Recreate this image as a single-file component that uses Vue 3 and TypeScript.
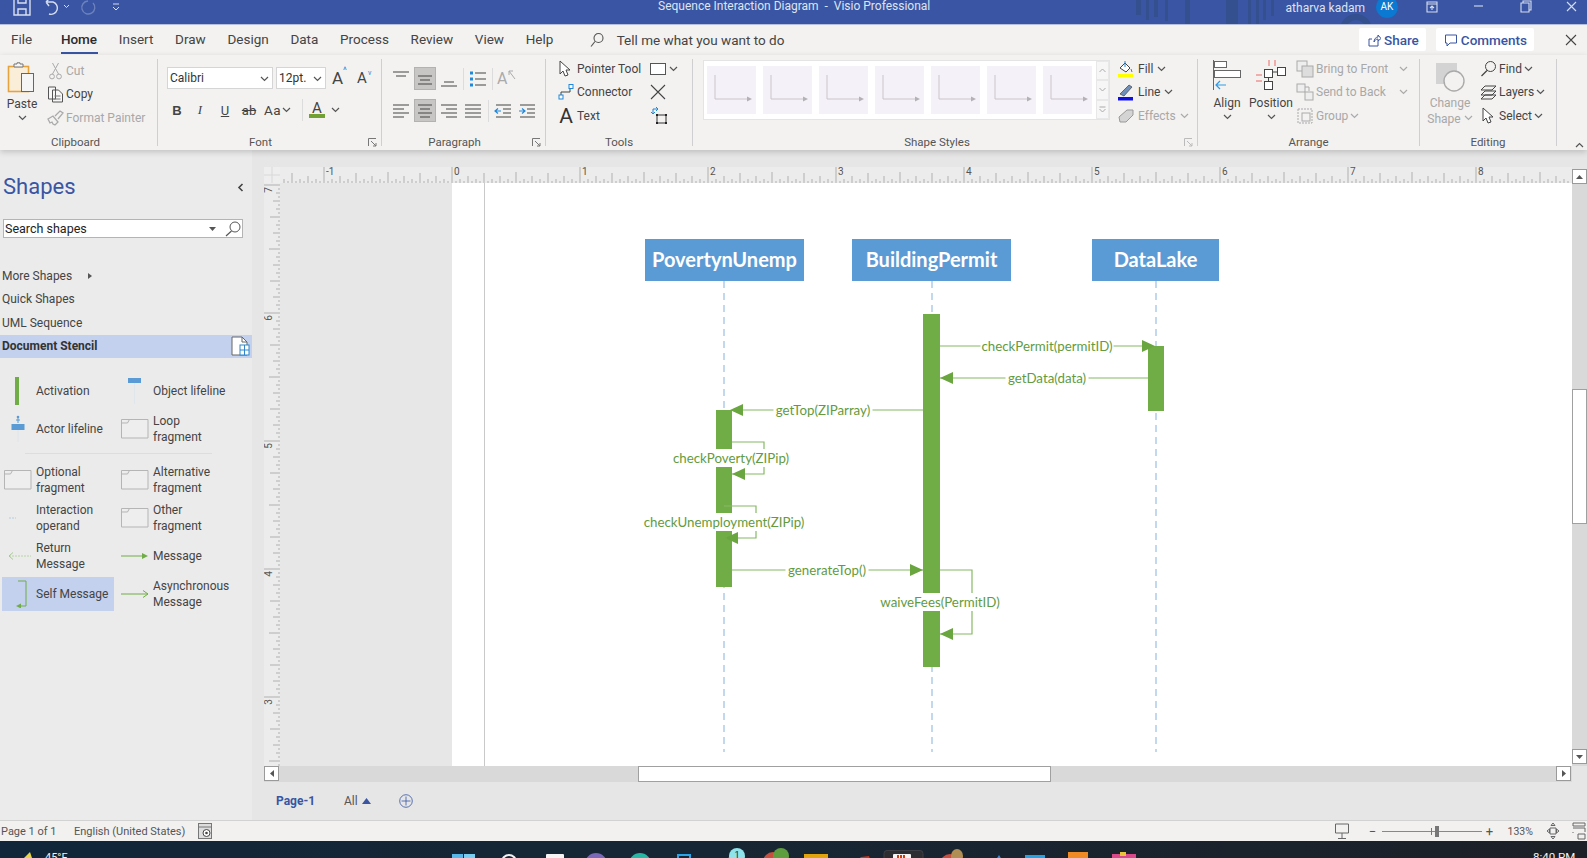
<script setup lang="ts">
import { computed, h } from 'vue'

// little dropdown caret used all over the ribbon
const Chev = (props: { c?: string }) =>
  h('svg', { width: 9, height: 6, viewBox: '0 0 9 6', style: 'flex:none' }, [
    h('path', { d: 'M1 1l3.5 3.5L8 1', fill: 'none', stroke: props.c || '#555', 'stroke-width': 1.2 }),
  ])
Chev.props = ['c']

const tabs = ['Insert', 'Draw', 'Design', 'Data', 'Process', 'Review', 'View', 'Help']

const paraTop = [
  { d: 'M2 3h16M5 7h10', active: false },
  { d: 'M3 7h14M5 11h10M3 15h14', active: true },
  { d: 'M5 13h10M2 17h16', active: false },
]
const paraBottom = [
  { d: 'M2 4h16M2 8h11M2 12h16M2 16h11', active: false },
  { d: 'M3 4h14M5 8h10M3 12h14M5 16h10', active: true },
  { d: 'M2 4h16M7 8h11M2 12h16M7 16h11', active: false },
  { d: 'M2 4h16M2 8h16M2 12h16M2 16h16', active: false },
]
const thumbs = [0, 1, 2, 3, 4, 5, 6]

// ruler ticks, one every 1/32 inch
const rulerMarks = [-1, 0, 1, 2, 3, 4, 5, 6, 7, 8]
const tickLen = (i: number) =>
  i % 32 === 0 ? 16 : i % 16 === 0 ? 11 : i % 8 === 0 ? 10 : i % 4 === 0 ? 7 : i % 2 === 0 ? 4 : 2
const hTicks = computed(() => {
  let d = ''
  for (let i = -44; i < 340; i++) {
    const x = 452 + i * 4
    if (x > 280 && x < 1572) d += `M${x} 183v-${tickLen(i)}`
  }
  return d
})
const vMarks = [7, 6, 5, 4, 3]
const vTicks = computed(() => {
  let d = ''
  for (let i = 0; i < 148; i++) {
    const y = 185 + i * 4
    d += `M280 ${y}h-${tickLen(i)}`
  }
  return d
})

// sequence diagram
const heads = [
  { name: 'PovertynUnemp', x: 645, w: 159 },
  { name: 'BuildingPermit', x: 852, w: 159 },
  { name: 'DataLake', x: 1092, w: 127 },
]
const lifelines = [724, 932, 1156]
const bars = [
  { x: 716, y: 410, w: 16, h: 177 },
  { x: 923, y: 314, w: 17, h: 353 },
  { x: 1148, y: 346, w: 16, h: 65 },
]
const lines = [
  'M940 346H1148',
  'M1148 378H940',
  'M923 410H732',
  'M732 442H764V474H732',
  'M724 506H756V538H726',
  'M732 570H923',
  'M940 570H972V634H940',
]
const arrows = [
  'M1155 346l-13 -6v12z',
  'M940 378l13 -6v12z',
  'M730 410l13 -6v12z',
  'M732 474l13 -6v12z',
  'M725 538l13 -6v12z',
  'M923 570l-13 -6v12z',
  'M940 634l13 -6v12z',
]
const labels = [
  { text: 'checkPermit(permitID)', cx: 1047, cy: 346, w: 133 },
  { text: 'getData(data)', cx: 1047, cy: 378, w: 83 },
  { text: 'getTop(ZIParray)', cx: 823, cy: 410, w: 99 },
  { text: 'checkPoverty(ZIPip)', cx: 731, cy: 458, w: 116 },
  { text: 'checkUnemployment(ZIPip)', cx: 724, cy: 522, w: 162 },
  { text: 'generateTop()', cx: 827, cy: 570, w: 83 },
  { text: 'waiveFees(PermitID)', cx: 940, cy: 602, w: 122 },
]
</script>

<template>
  <div class="app">
    <!-- title bar -->
    <header class="titlebar">
      <svg class="deco" width="290" height="24" viewBox="1130 0 290 24">
        <g fill="#34508f">
          <rect x="1136" y="0" width="5" height="15" />
          <rect x="1146" y="0" width="3" height="20" />
          <rect x="1154" y="0" width="4" height="17" />
          <rect x="1165" y="0" width="3" height="21" />
          <rect x="1185" y="0" width="5" height="24" />
          <rect x="1226" y="0" width="12" height="24" />
          <rect x="1248" y="0" width="3" height="24" />
          <rect x="1256" y="0" width="3" height="24" />
          <rect x="1263" y="0" width="3" height="20" />
          <rect x="1271" y="0" width="3" height="16" />
        </g>
        <circle cx="1356" cy="30" r="13" fill="none" stroke="#34508f" stroke-width="6" />
      </svg>
      <svg class="qat" width="658" height="24" viewBox="0 0 658 24">
        <g fill="none" stroke="#d7def0" stroke-width="1.4">
          <path d="M14 -2H28L30 0V15H14Z" />
          <path d="M18 15V9H26V15M18 -2V3H26V-2" />
          <path d="M46 2H53A5 5 0 0 1 49 14M46 2L49 -1M46 2L49 6" />
          <path d="M64 5l2.5 2.5L69 5" stroke-width="1" />
          <path d="M93 3A6.5 6.5 0 1 1 88 1" stroke="#6d82bd" />
          <path d="M113 4h6M113 7l3 3 3-3" stroke-width="1" />
        </g>
      </svg>
      <div class="doc-title">Sequence Interaction Diagram&nbsp; - &nbsp;Visio Professional</div>
      <div class="user">atharva kadam</div>
      <div class="avatar">AK</div>
      <svg class="winctl" width="167" height="24" viewBox="1420 0 167 24">
        <g fill="none" stroke="#d7def0" stroke-width="1.1">
          <path d="M1427 2h10v10h-10zM1427 4h10M1432 10V6M1430 8l2-2 2 2" />
          <path d="M1474 6h9" />
          <path d="M1521 3h8v9h-8zM1523 3V1h8v9h-2" />
          <path d="M1567 2l9 9M1576 2l-9 9" />
        </g>
      </svg>
    </header>

    <!-- tabs -->
    <nav class="tabrow">
      <span class="tab file">File</span>
      <span class="tab home">Home</span>
      <span v-for="t in tabs" :key="t" class="tab">{{ t }}</span>
      <svg class="tell-icon" width="16" height="16" viewBox="0 0 16 16">
        <circle cx="9.5" cy="6" r="4.5" fill="none" stroke="#555" stroke-width="1.1" />
        <path d="M6 9.5L2 14.5" stroke="#555" stroke-width="1.2" />
      </svg>
      <span class="tell">Tell me what you want to do</span>
      <button class="top-btn share">
        <svg width="14" height="14" viewBox="0 0 14 14"><path d="M2 6v7h9V8M2 6h3M7 9c0-3 2-5 4-5V2l3 3.5L11 8V6C9 6 8 7 7 9z" fill="none" stroke="#3955a3" stroke-width="1" /></svg>
        Share
      </button>
      <button class="top-btn comments">
        <svg width="14" height="14" viewBox="0 0 14 14"><path d="M1.5 2h11v8H6l-3 3v-3H1.5z" fill="none" stroke="#3955a3" stroke-width="1" /></svg>
        Comments
      </button>
      <svg class="close-doc" width="12" height="12" viewBox="0 0 12 12"><path d="M1 1l10 10M11 1L1 11" stroke="#444" stroke-width="1.1" /></svg>
    </nav>

    <!-- ribbon -->
    <section class="ribbon">
      <div class="group g-clip">
        <div class="body clip-body">
          <div class="big paste">
            <svg width="30" height="32" viewBox="0 0 30 32">
              <rect x="1.5" y="4.5" width="20" height="25" fill="#fbeed8" stroke="#e6a23c" stroke-width="1.6" />
              <path d="M7 5V2h3V0.8h3V2h3v3z" fill="#f6f6f6" stroke="#777" />
              <rect x="14.5" y="11.5" width="12" height="18" fill="#f5f5f5" stroke="#666" />
            </svg>
            <span class="big-label">Paste</span>
            <Chev />
          </div>
          <div class="col">
            <div class="row dim">
              <svg class="ico" width="16" height="18" viewBox="0 0 16 18"><path d="M5 1l6 11M11 1L5 12" stroke="#aaa" fill="none" /><circle cx="4.5" cy="14.5" r="2.4" fill="none" stroke="#aaa" /><circle cx="11.5" cy="14.5" r="2.4" fill="none" stroke="#aaa" /></svg>
              Cut
            </div>
            <div class="row">
              <svg class="ico" width="16" height="18" viewBox="0 0 16 18"><path d="M1 2h7v12H1zM5 5h6l4 4v8H5z" fill="#f7f7f7" stroke="#555" /><path d="M7 11h6M7 14h6" stroke="#777" /></svg>
              Copy
            </div>
            <div class="row dim">
              <svg class="ico" width="17" height="16" viewBox="0 0 17 16"><path d="M1 9l5-3 5 6-3 3-2-1-1-2-2 1zM8 6l5-5 3 2-5 6" fill="none" stroke="#aaa" stroke-width="1.3" /></svg>
              Format Painter
            </div>
          </div>
        </div>
        <div class="glabel">Clipboard</div>
      </div>

      <div class="group g-font">
        <div class="body">
          <div class="font-top">
            <div class="combo name">Calibri<Chev class="combo-ch" /></div>
            <div class="combo size">12pt.<Chev class="combo-ch" /></div>
            <span class="grow-a">A<i>^</i></span>
            <span class="grow-a second">A<i class="down">v</i></span>
          </div>
          <div class="font-bottom">
            <b class="cell fb">B</b>
            <i class="cell fi">I</i>
            <u class="cell">U</u>
            <s class="cell">ab</s>
            <span class="cell aa">Aa <Chev /></span>
            <span class="cell"><span class="vsep"></span></span>
            <span class="cell color-a">A</span>
            <span class="cell"><Chev /></span>
          </div>
        </div>
        <div class="glabel">Font</div>
        <svg class="launcher" width="9" height="9" viewBox="0 0 9 9"><path d="M.5 8V.5H8M3 3l5 5M8 5v3H5" fill="none" stroke="#777" /></svg>
      </div>

      <div class="group g-para">
        <div class="body">
          <div class="para-row">
            <span v-for="(p, i) in paraTop" :key="i" class="pcell" :class="{ on: p.active }">
              <svg width="20" height="20" viewBox="0 0 20 20"><path :d="p.d" stroke="#444" stroke-width="1.2" /></svg>
            </span>
            <span class="vsep short"></span>
            <span class="pcell">
              <svg width="20" height="20" viewBox="0 0 20 20">
                <path d="M7 4h11M7 10h11M7 16h11" stroke="#444" stroke-width="1.2" />
                <path d="M2 2.5h3v3H2zM2 8.5h3v3H2zM2 14.5h3v3H2z" fill="#1f88d9" />
              </svg>
            </span>
            <span class="vsep short"></span>
            <span class="rtl-a">A<svg width="9" height="11" viewBox="0 0 9 11"><path d="M8 10L2 2M2 6V2h4" fill="none" stroke="#aaa" /></svg></span>
          </div>
          <div class="para-row second">
            <span v-for="(p, i) in paraBottom" :key="i" class="pcell" :class="{ on: p.active }">
              <svg width="20" height="20" viewBox="0 0 20 20"><path :d="p.d" stroke="#444" stroke-width="1.2" /></svg>
            </span>
            <span class="vsep short tight"></span>
            <span class="pcell">
              <svg width="20" height="20" viewBox="0 0 20 20"><path d="M3 4h15M10 8h8M10 12h8M3 16h15" stroke="#444" stroke-width="1.1" /><path d="M8 10H2M5 7.5L2 10l3 2.5" fill="none" stroke="#1f88d9" stroke-width="1.2" /></svg>
            </span>
            <span class="pcell">
              <svg width="20" height="20" viewBox="0 0 20 20"><path d="M3 4h15M10 8h8M10 12h8M3 16h15" stroke="#444" stroke-width="1.1" /><path d="M2 10h6M5 7.5L8 10l-3 2.5" fill="none" stroke="#1f88d9" stroke-width="1.2" /></svg>
            </span>
          </div>
        </div>
        <div class="glabel">Paragraph</div>
        <svg class="launcher" width="9" height="9" viewBox="0 0 9 9"><path d="M.5 8V.5H8M3 3l5 5M8 5v3H5" fill="none" stroke="#777" /></svg>
      </div>

      <div class="group g-tools">
        <div class="body tools-body">
          <div class="col tools-text">
            <div class="row">
              <svg class="ico t" width="16" height="18" viewBox="0 0 16 18"><path d="M2 1v13l3-3 2 5 3-1-2-5h4z" fill="#fff" stroke="#444" /></svg>
              Pointer Tool
            </div>
            <div class="row">
              <svg class="ico t" width="16" height="18" viewBox="0 0 16 18"><path d="M3 13V9h9V5" fill="none" stroke="#444" /><rect x="1" y="12" width="4" height="4" fill="#fff" stroke="#1f88d9" /><rect x="11" y="1.500" width="4" height="4" fill="#fff" stroke="#1f88d9" /></svg>
              Connector
            </div>
            <div class="row">
              <span class="big-a t">A</span>
              Text
            </div>
          </div>
          <div class="col tools-right">
            <div class="row r-ic">
              <svg width="16" height="14" viewBox="0 0 16 14"><rect x=".5" y="1.500" width="15" height="11" fill="#fff" stroke="#555" /></svg>
              <Chev class="tool-ch" />
            </div>
            <div class="row r-ic">
              <svg width="16" height="16" viewBox="0 0 16 16"><path d="M1 1l14 14M15 1L1 15" stroke="#444" stroke-width="1.1" /></svg>
            </div>
            <div class="row r-ic">
              <svg width="17" height="17" viewBox="0 0 17 17"><path d="M7 8h9v8H7z" fill="none" stroke="#333" /><path d="M6 7h2v2H6zM15 7h2v2h-2zM6 15h2v2H6zM15 15h2v2h-2z" fill="#222" /><path d="M1 5l2 2 2-2M3 7V2h5M6 0l2 2-2 2" fill="none" stroke="#1f88d9" /></svg>
            </div>
          </div>
        </div>
        <div class="glabel">Tools</div>
      </div>

      <div class="group g-styles">
        <div class="body styles-body">
          <div class="gallery">
            <div class="thumbs">
              <div v-for="t in thumbs" :key="t" class="thumb">
                <svg width="49" height="48" viewBox="0 0 49 48"><path d="M8 9V33H41" fill="none" stroke="#c9c5c9" /><path d="M45 33l-5-2.500v5z" fill="#b4b0b4" /></svg>
              </div>
            </div>
            <div class="gal-btns">
              <span><svg width="7" height="5" viewBox="0 0 7 5"><path d="M.5 4l3-3 3 3" fill="none" stroke="#aaa" /></svg></span>
              <span><svg width="7" height="5" viewBox="0 0 7 5"><path d="M.5 1l3 3 3-3" fill="none" stroke="#aaa" /></svg></span>
              <span><svg width="7" height="7" viewBox="0 0 7 7"><path d="M.5 1h6M.5 3l3 3 3-3" fill="none" stroke="#aaa" /></svg></span>
            </div>
          </div>
          <div class="col fill-col">
            <div class="row">
              <svg class="ico f" width="16" height="18" viewBox="0 0 16 18"><path d="M2 8l5-5 5 5-4 4z" fill="#fff" stroke="#444" /><path d="M7 1v6M13 9l1 3" stroke="#1f88d9" /><rect y="14" width="15" height="3.500" fill="#ffff00" /></svg>
              Fill <Chev />
            </div>
            <div class="row">
              <svg class="ico f" width="16" height="18" viewBox="0 0 16 18"><path d="M2 11L11 2l3 2-8 9z" fill="#6f8fb8" stroke="#444" stroke-width=".7" /><rect y="14" width="15" height="3.500" fill="#1010e0" /></svg>
              Line <Chev />
            </div>
            <div class="row dim">
              <svg class="ico f" width="16" height="16" viewBox="0 0 16 16"><path d="M1 9l8-7h6v5l-7 7H2z" fill="#d4d4d4" stroke="#999" /></svg>
              Effects <Chev c="#aaa" />
            </div>
          </div>
        </div>
        <div class="glabel">Shape Styles</div>
        <svg class="launcher" width="9" height="9" viewBox="0 0 9 9"><path d="M.5 8V.5H8M3 3l5 5M8 5v3H5" fill="none" stroke="#bbb" /></svg>
      </div>

      <div class="group g-arrange">
        <div class="body arrange-body">
          <div class="big b-align">
            <svg width="30" height="32" viewBox="0 0 30 32">
              <path d="M1.500 0V30" stroke="#666" />
              <rect x="2.500" y="1.500" width="12" height="6" fill="#fff" stroke="#666" />
              <rect x="2.500" y="10.500" width="26" height="7" fill="#fff" stroke="#666" />
              <path d="M14 25H4M8 21l-4 4 4 4" fill="none" stroke="#2e9be6" stroke-width="1.2" />
            </svg>
            <span class="big-label">Align</span>
            <Chev />
          </div>
          <div class="big b-pos">
            <svg width="34" height="32" viewBox="0 0 34 32">
              <path d="M15 0v6M21 0v6M2 15h6M2 21h6" stroke="#e66" />
              <rect x="10.500" y="9.500" width="8" height="8" fill="#fff" stroke="#444" />
              <rect x="23.500" y="7.500" width="8" height="8" fill="#fff" stroke="#444" />
              <rect x="10.500" y="21.500" width="8" height="8" fill="#fff" stroke="#444" />
              <path d="M18 12h6M14.500 17v5" stroke="#444" />
            </svg>
            <span class="big-label">Position</span>
            <Chev />
          </div>
          <div class="col arr-col">
            <div class="row dim">
              <svg class="ico a" width="18" height="18" viewBox="0 0 18 18"><rect x="1" y="1" width="10" height="10" fill="#eee" stroke="#aaa" /><rect x="6" y="6" width="11" height="11" fill="#ddd" stroke="#aaa" /></svg>
              <span class="arr-t">Bring to Front</span><Chev c="#aaa" />
            </div>
            <div class="row dim">
              <svg class="ico a" width="18" height="18" viewBox="0 0 18 18"><rect x="1" y="1" width="8" height="8" fill="#eee" stroke="#aaa" /><rect x="9" y="9" width="8" height="8" fill="#eee" stroke="#aaa" /><path d="M9 4h4v4" fill="none" stroke="#aaa" /></svg>
              <span class="arr-t">Send to Back</span><Chev c="#aaa" />
            </div>
            <div class="row dim">
              <svg class="ico a" width="18" height="18" viewBox="0 0 18 18"><rect x="2" y="2" width="14" height="14" fill="none" stroke="#aaa" stroke-dasharray="2 1" /><rect x="6" y="6" width="8" height="8" fill="none" stroke="#aaa" /></svg>
              Group <Chev c="#aaa" />
            </div>
          </div>
        </div>
        <div class="glabel">Arrange</div>
      </div>

      <div class="group g-edit">
        <div class="body edit-body">
          <div class="big b-change">
            <svg width="30" height="30" viewBox="0 0 30 30"><rect x="1" y="1" width="21" height="21" fill="#d3d3d3" /><circle cx="19" cy="19" r="10" fill="#f3f2f1" stroke="#aaa" stroke-width="1.4" /></svg>
            <span class="big-label dim">Change</span>
            <span class="big-label dim sh">Shape <Chev c="#aaa" /></span>
          </div>
          <div class="col edit-col">
            <div class="row">
              <svg class="ico e" width="17" height="17" viewBox="0 0 17 17"><circle cx="10.500" cy="6.500" r="5" fill="none" stroke="#444" /><path d="M7 10.500L1.500 16" stroke="#444" stroke-width="1.2" /></svg>
              Find <Chev />
            </div>
            <div class="row">
              <svg class="ico e" width="17" height="17" viewBox="0 0 17 17"><path d="M5 2h11l-4 4H1zM5 7h11l-4 4H1zM5 11h11l-4 4H1z" fill="#f3f2f1" stroke="#444" /></svg>
              Layers <Chev />
            </div>
            <div class="row">
              <svg class="ico e" width="17" height="18" viewBox="0 0 17 18"><path d="M3 1v13l3-3 2 5 3-1-2-5h4z" fill="#fff" stroke="#444" /></svg>
              Select <Chev />
            </div>
          </div>
        </div>
        <div class="glabel">Editing</div>
      </div>

      <svg class="collapse" width="9" height="6" viewBox="0 0 9 6"><path d="M1 5l3.500-3.500L8 5" fill="none" stroke="#555" stroke-width="1.2" /></svg>
    </section>

    <!-- work area -->
    <div class="work">
      <aside class="panel">
        <div class="panel-head">
          <h2>Shapes</h2>
          <svg width="7" height="9" viewBox="0 0 7 9"><path d="M5.500 1L2 4.500 5.500 8" fill="none" stroke="#444" stroke-width="1.600" /></svg>
        </div>
        <div class="search">
          <span>Search shapes</span>
          <svg class="drop" width="7" height="4" viewBox="0 0 7 4"><path d="M0 0h7L3.500 4z" fill="#555" /></svg>
          <svg width="16" height="16" viewBox="0 0 16 16"><circle cx="10" cy="6" r="5" fill="none" stroke="#555" /><path d="M6.500 10L1 15" stroke="#555" stroke-width="1.200" /></svg>
        </div>
        <div class="stencils">
          <div class="st">More Shapes <svg width="4" height="6" viewBox="0 0 4 6"><path d="M0 0l4 3-4 3z" fill="#555" /></svg></div>
          <div class="st">Quick Shapes</div>
          <div class="st">UML Sequence</div>
          <div class="st cur">
            <b>Document Stencil</b>
            <svg width="19" height="20" viewBox="0 0 19 20"><path d="M1 1h10l5 5v13H1z" fill="#fff" stroke="#666" /><path d="M11 1v5h5" fill="none" stroke="#666" /><rect x="9" y="9" width="9" height="10" fill="#fff" stroke="#2e86c9" /><path d="M13.500 9v10M9 14h9" stroke="#2e86c9" /></svg>
          </div>
        </div>
        <div class="shape-grid">
          <div class="item">
            <span class="si"><svg width="6" height="28" viewBox="0 0 6 28"><rect width="4" height="28" fill="#70ad47" /></svg></span>
            <span>Activation</span>
          </div>
          <div class="item">
            <span class="si"><svg width="16" height="28" viewBox="0 0 16 28"><rect x="1" y="1" width="13" height="5" fill="#5b9bd5" /><path d="M7.500 6v21" stroke="#dfe6ec" /></svg></span>
            <span>Object lifeline</span>
          </div>
          <div class="item">
            <span class="si"><svg width="16" height="28" viewBox="0 0 16 28"><circle cx="8" cy="2" r="1.300" fill="#5b9bd5" /><path d="M8 3v5M6 5h4" stroke="#5b9bd5" /><rect x="1.500" y="9" width="13" height="6" fill="#5b9bd5" /><path d="M8 15v12" stroke="#dfe6ec" /></svg></span>
            <span>Actor lifeline</span>
          </div>
          <div class="item">
            <span class="si"><svg class="frag" width="28" height="20" viewBox="0 0 28 20"><path d="M.5.500h26.500v18.500H.5zM.5 4h6l2-3.500" fill="#eee" stroke="#b5b5b5" /></svg></span>
            <span>Loop<br />fragment</span>
          </div>
          <div class="divider"></div>
          <div class="item">
            <span class="si"><svg class="frag" width="28" height="20" viewBox="0 0 28 20"><path d="M.5.500h26.500v18.500H.5zM.5 4h6l2-3.500" fill="#eee" stroke="#b5b5b5" /></svg></span>
            <span>Optional<br />fragment</span>
          </div>
          <div class="item">
            <span class="si"><svg class="frag" width="28" height="20" viewBox="0 0 28 20"><path d="M.5.500h26.500v18.500H.5zM.5 4h6l2-3.500" fill="#eee" stroke="#b5b5b5" /></svg></span>
            <span>Alternative<br />fragment</span>
          </div>
          <div class="item">
            <span class="si"><svg width="28" height="8" viewBox="0 0 28 8"><path d="M5 4h7" stroke="#b7cbe0" stroke-dasharray="2 1" /></svg></span>
            <span>Interaction<br />operand</span>
          </div>
          <div class="item">
            <span class="si"><svg class="frag" width="28" height="20" viewBox="0 0 28 20"><path d="M.5.500h26.500v18.500H.5zM.5 4h6l2-3.500" fill="#eee" stroke="#b5b5b5" /></svg></span>
            <span>Other<br />fragment</span>
          </div>
          <div class="item">
            <span class="si"><svg width="28" height="10" viewBox="0 0 28 10"><path d="M5 5h22" stroke="#b9d3a6" stroke-dasharray="2 1" /><path d="M9 1.500L5 5l4 3.500" fill="none" stroke="#a8c993" /></svg></span>
            <span>Return<br />Message</span>
          </div>
          <div class="item">
            <span class="si"><svg width="28" height="10" viewBox="0 0 28 10"><path d="M0 5h22" stroke="#70ad47" /><path d="M27 5l-6-3v6z" fill="#70ad47" /></svg></span>
            <span>Message</span>
          </div>
          <div class="item sel">
            <span class="si"><svg width="20" height="28" viewBox="0 0 20 28"><path d="M9 1h8V26H9" fill="none" stroke="#70ad47" /><path d="M7 26l5-2.500v5z" fill="#70ad47" /></svg></span>
            <span>Self Message</span>
          </div>
          <div class="item">
            <span class="si"><svg width="28" height="10" viewBox="0 0 28 10"><path d="M0 5h27M22 1.500L27 5l-5 3.500" fill="none" stroke="#70ad47" /></svg></span>
            <span>Asynchronous<br />Message</span>
          </div>
        </div>
      </aside>

      <div class="main">
        <div class="corner">
          <svg width="16" height="16" viewBox="0 0 16 16"><path d="M8 0v16M0 8h16" stroke="#d8d8d8" /></svg>
        </div>
        <svg class="hruler" width="1292" height="16" viewBox="280 167 1292 16">
          <path :d="hTicks" stroke="#b0b0b0" />
          <text v-for="n in rulerMarks" :key="n" :x="452 + n * 128 + 2" y="175" class="rtext">{{ n }}</text>
        </svg>
        <svg class="vruler" width="16" height="583" viewBox="264 183 16 583">
          <path :d="vTicks" stroke="#b0b0b0" />
          <text
            v-for="(n, i) in vMarks"
            :key="n"
            class="rtext"
            text-anchor="middle"
            :transform="`translate(272 ${190 + i * 128}) rotate(-90)`"
          >{{ n }}</text>
        </svg>

        <div class="canvas">
          <svg width="1292" height="583" viewBox="280 183 1292 583">
            <rect x="280" y="183" width="172" height="583" fill="#e7e7e7" />
            <rect x="452" y="183" width="1120" height="583" fill="#fff" />
            <path d="M484.500 183V766" stroke="#c9c9c9" />
            <line
              v-for="x in lifelines"
              :key="x"
              :x1="x"
              :x2="x"
              y1="281"
              y2="752"
              stroke="#a8c8e8"
              stroke-width="1.400"
              stroke-dasharray="7 5"
            />
            <g v-for="b in heads" :key="b.name">
              <rect :x="b.x" y="239" :width="b.w" height="42" fill="#5b9bd5" />
              <text :x="b.x + b.w / 2" y="267" class="head-text" text-anchor="middle">{{ b.name }}</text>
            </g>
            <rect v-for="(a, i) in bars" :key="i" :x="a.x" :y="a.y" :width="a.w" :height="a.h" fill="#70ad47" />
            <path v-for="(d, i) in lines" :key="i" :d="d" fill="none" stroke="#85b964" stroke-width="1.200" />
            <path v-for="(d, i) in arrows" :key="i" :d="d" fill="#6aa63f" />
            <g v-for="l in labels" :key="l.text">
              <rect :x="l.cx - l.w / 2" :y="l.cy - 9" :width="l.w" height="18" fill="#fff" />
              <text :x="l.cx" :y="l.cy + 5" class="msg-text" text-anchor="middle">{{ l.text }}</text>
            </g>
          </svg>
        </div>

        <div class="vscroll">
          <span class="sbtn"><svg width="7" height="4" viewBox="0 0 7 4"><path d="M0 4l3.500-4L7 4z" fill="#555" /></svg></span>
          <span class="vthumb"></span>
          <span class="sbtn down"><svg width="7" height="4" viewBox="0 0 7 4"><path d="M0 0l3.500 4L7 0z" fill="#555" /></svg></span>
        </div>

        <div class="hscroll">
          <span class="sbtn"><svg width="4" height="7" viewBox="0 0 4 7"><path d="M4 0L0 3.500 4 7z" fill="#555" /></svg></span>
          <span class="hthumb"></span>
          <span class="sbtn right"><svg width="4" height="7" viewBox="0 0 4 7"><path d="M0 0l4 3.500L0 7z" fill="#555" /></svg></span>
        </div>

        <div class="pagetabs">
          <b>Page-1</b>
          <span class="all">All <svg width="9" height="6" viewBox="0 0 9 6"><path d="M0 6l4.500-6L9 6z" fill="#3955a3" /></svg></span>
          <svg width="14" height="14" viewBox="0 0 14 14"><circle cx="7" cy="7" r="6.300" fill="none" stroke="#3955a3" stroke-width=".8" /><path d="M7 2.500v9M2.500 7h9" stroke="#3955a3" stroke-width=".8" /></svg>
        </div>
      </div>
    </div>

    <!-- status bar -->
    <footer class="status">
      <span class="s1">Page 1 of 1</span>
      <span class="s2">English (United States)</span>
      <svg width="14" height="16" viewBox="0 0 14 16"><rect x=".5" y=".500" width="13" height="15" fill="#ddd" stroke="#777" /><path d="M.5 4h13" stroke="#777" /><circle cx="8.500" cy="10" r="3.500" fill="#fff" stroke="#444" /><circle cx="8.500" cy="10" r="1.300" fill="#444" /></svg>
      <svg class="present" width="16" height="16" viewBox="0 0 16 16"><path d="M1.500 1h13v9h-13zM8 10v5M4 15.500h8" fill="none" stroke="#666" /></svg>
      <span class="zm">−</span>
      <span class="slider"><i class="mid"></i><i class="knob"></i></span>
      <span class="zm">+</span>
      <span class="pct">133%</span>
      <svg class="fit" width="14" height="18" viewBox="0 0 14 18"><path d="M4 6h6v6H4zM7 1L5 3.500h4zM7 17l-2-2.500h4zM1 9l2.500-2v4zM13 9l-2.500-2v4z" fill="none" stroke="#666" /></svg>
      <svg width="14" height="18" viewBox="0 0 14 18"><path d="M1 1h12v3H1zM1 6h12v4M1 10v1M6 12h7v5H6z" fill="none" stroke="#666" /></svg>
    </footer>

    <!-- taskbar, only the top of it shows -->
    <footer class="taskbar">
      <svg class="tb" width="1587" height="17" viewBox="0 841 1587 17">
        <path d="M24 858l6-6 2 6z" fill="#e8d44a" />
        <rect x="452" y="854" width="11" height="6" fill="#55b7ea" />
        <rect x="464" y="854" width="11" height="6" fill="#78cdf2" />
        <circle cx="509" cy="862" r="7" fill="none" stroke="#f2f2f2" stroke-width="2" />
        <rect x="546" y="854" width="18" height="6" fill="#f4f4f4" rx="1" />
        <circle cx="596" cy="864" r="11" fill="#7a68b8" />
        <circle cx="640" cy="864" r="11" fill="#26b8a5" />
        <rect x="678" y="855" width="12" height="8" fill="none" stroke="#2aa5e8" stroke-width="2" />
        <path d="M720 866l11-11v11z" fill="#2b79c9" />
        <circle cx="737" cy="856" r="8" fill="#8fe3ea" />
        <text x="737" y="858" class="tb-num" text-anchor="middle">1</text>
        <circle cx="773" cy="862" r="10" fill="#c64f3d" />
        <circle cx="781" cy="856" r="8" fill="#5f9e3f" />
        <rect x="804" y="854" width="24" height="8" fill="#e0a30b" />
        <path d="M850 866l11-9 8-1 3 10z" fill="#c2391f" />
        <rect x="884" y="850.500" width="39" height="14" rx="3" fill="#2c2d31" stroke="#3e3f44" />
        <rect x="893" y="854" width="18" height="8" rx="1" fill="#f4f4f4" />
        <path d="M897 855h2v7h-2zM900 855h2v7h-2zM903 855h2v7h-2z" fill="#d83b01" />
        <circle cx="950" cy="864" r="10" fill="#c64f3d" />
        <ellipse cx="957" cy="856" rx="6" ry="7" fill="#b18f54" />
        <path d="M992 866l7-11 7 11z" fill="#3a8de0" />
        <rect x="1025" y="855" width="20" height="8" fill="#22a3e6" />
        <rect x="1068" y="852" width="20" height="10" fill="#f08a24" />
        <rect x="1112" y="854" width="24" height="8" fill="#d8488b" />
        <rect x="1120" y="852" width="6" height="4" fill="#e8c53a" />
      </svg>
      <span class="temp">45°F</span>
      <span class="clock">8:40 PM</span>
    </footer>
  </div>
</template>

<style>
html, body { margin: 0; height: 100%; overflow: hidden; background: #16202c; }
</style>

<style scoped>
.app {
  width: 1587px;
  height: 858px;
  overflow: hidden;
  display: flex;
  flex-direction: column;
  font-family: Roboto, "Liberation Sans", sans-serif;
  font-size: 12px;
  color: #444;
}
svg { display: block; flex: none; }

/* title bar */
.titlebar {
  height: 24px;
  flex: none;
  display: flex;
  background: #3955a3;
  color: #dfe4f2;
  position: relative;
  overflow: hidden;
}
.deco { position: absolute; left: 1130px; top: 0; }
.qat, .winctl { position: relative; }
.doc-title { flex: 1; font-size: 12px; line-height: 12px; position: relative; }
.user { font-size: 12px; line-height: 16px; position: relative; margin-right: 11px; }
.avatar {
  width: 22px; height: 22px; border-radius: 50%;
  background: #0b78d1; color: #fff; font-size: 10px; line-height: 22px; text-align: center;
  margin: -4px 22px 0 0; position: relative;
}

/* tabs */
.tabrow {
  height: 31px;
  flex: none;
  box-sizing: border-box;
  display: flex;
  align-items: center;
  gap: 21.7px;
  padding-left: 11px;
  padding-bottom: 1px;
  background: #f3f2f1;
  border-top: 1px solid #b6c0dc;
  font-size: 13.5px;
}
.tab { position: relative; line-height: 29px; }
.file { margin-right: 7px; }
.home { font-weight: 500; color: #2b2b2b; }
.home::after { content: ""; position: absolute; left: 0; right: -1px; bottom: 0; height: 2px; background: #3955a3; }
.tell-icon { margin-left: 14px; }
.tell { margin-left: -10px; width: 721px; flex: none; }
.top-btn {
  height: 23px; border: 0; background: #fff; border-radius: 2px; font: inherit; font-weight: 500; font-size: 13.5px;
  color: #3955a3; display: flex; align-items: center; justify-content: center; gap: 3px; padding: 0;
}
.share { width: 67px; }
.comments { width: 98px; margin-left: -11.7px; }
.close-doc { margin-left: 9px; }

/* ribbon */
.ribbon {
  height: 95px;
  flex: none;
  box-sizing: border-box;
  display: flex;
  padding-top: 4px;
  padding-bottom: 4px;
  background: #f3f2f1;
  position: relative;
  z-index: 2;
  box-shadow: 0 2px 6px rgba(0, 0, 0, 0.18);
}
.group {
  box-sizing: border-box;
  display: flex;
  flex-direction: column;
  border-right: 1px solid #cfcfcf;
  position: relative;
}
.g-clip { width: 158px; }
.g-font { width: 224px; }
.g-para { width: 164px; }
.g-tools { width: 147px; }
.g-styles { width: 505px; }
.g-arrange { width: 222px; }
.g-edit { width: 137px; }
.body { flex: 1; min-height: 0; }
.glabel { height: 14px; line-height: 14px; margin-bottom: -3px; text-align: center; font-size: 11.5px; color: #555; }
.g-clip .glabel { padding-right: 6px; }
.g-font .glabel, .g-para .glabel { padding-right: 18px; }
.g-styles .glabel { padding-right: 16px; }
.launcher { position: absolute; right: 4px; bottom: -1px; }
.collapse { position: absolute; right: 3px; bottom: 2px; }

.col { display: flex; flex-direction: column; }
.row { height: 23.5px; display: flex; align-items: center; gap: 4px; white-space: nowrap; }
.dim { color: #a8a8a8; }
.big { display: flex; flex-direction: column; align-items: center; }
.big-label { line-height: 16px; margin-top: 3px; }
.big > svg:last-child { margin-top: 3px; }

.clip-body { display: flex; }
.paste { width: 44px; padding-top: 3px; }
.paste .big-label { margin-top: 2px; }
.clip-body .ico { width: 17px; margin-left: 3px; margin-right: -2px; }

.font-top { display: flex; align-items: center; margin: 8px 0 0 9px; height: 22px; }
.combo {
  box-sizing: border-box; height: 22px; background: #fff; border: 1px solid #d5d5d5;
  display: flex; align-items: center; padding-left: 2px; font-size: 12px; color: #333; position: relative;
}
.combo.name { width: 106px; }
.combo.size { width: 50px; margin-left: 3px; }
.combo-ch { position: absolute; right: 3px; top: 8px; }
.grow-a { font-size: 17px; margin-left: 6px; width: 16px; position: relative; color: #444; }
.grow-a.second { font-size: 15px; margin-left: 9px; }
.grow-a i { position: absolute; left: 11px; top: -3px; font-size: 9px; font-style: normal; color: #1f88d9; }
.grow-a i.down { font-size: 7px; top: 0; }
.font-bottom {
  display: grid;
  grid-template-columns: 20px 26px 24px 24px 34px 14px 16px 20px;
  margin: 10px 0 0 9px;
  height: 22px;
  align-items: center;
}
.cell { display: flex; align-items: center; justify-content: center; font-size: 13px; color: #444; }
.fb { font-family: "Liberation Sans", sans-serif; }
.fi { font-family: "Liberation Serif", serif; }
.aa { font-size: 13.5px; gap: 1px; justify-content: flex-start; padding-left: 3px; letter-spacing: 0.5px; }
.color-a { border-bottom: 4px solid #70a132; height: 16px; font-size: 15px; line-height: 14px; box-sizing: border-box; }
.vsep { display: block; width: 1px; height: 22px; background: #dcdcdc; flex: none; }

.para-row { display: flex; align-items: center; padding-left: 7px; height: 23px; margin-top: 8px; }
.para-row.second { margin-top: 9px; }
.pcell { width: 24px; height: 23px; box-sizing: border-box; display: flex; align-items: center; justify-content: center; flex: none; }
.pcell.on { background: #c8c6c4; border: 1px solid #b4b2b0; width: 22px; margin: 0 1px; }
.para-row .short { margin: 0 2px; }
.para-row .short.tight { margin: 0 2.5px; }
.rtl-a { display: flex; font-size: 16px; color: #aaa; margin-left: 2px; align-items: flex-start; }

.tools-body { display: flex; padding-left: 12px; margin-top: -2px; }
.tools-text { width: 92px; }
.tools-text .row { gap: 3px; }
.ico.t { width: 16px; }
.big-a { font-size: 21px; width: 16px; text-align: center; line-height: 20px; color: #333; }
.r-ic { gap: 3px; }

.styles-body { display: flex; }
.gallery {
  width: 407px; height: 60px; margin: 1px 0 0 10px; background: #fff;
  box-sizing: border-box; display: flex; border: 1px solid #e4e4e4;
}
.thumbs { display: flex; gap: 7px; padding: 5px 0 0 3px; width: 392px; box-sizing: border-box; flex: none; }
.thumb { width: 49px; height: 48px; background: #f5f1f8; flex: none; }
.gal-btns { flex: 1; display: flex; flex-direction: column; }
.gal-btns span { flex: 1; display: flex; align-items: center; justify-content: center; border: 1px solid #e8e8e8; background: #f6f6f6; }
.fill-col { margin: -2px 0 0 8px; }
.fill-col .row { gap: 4px; }

.arrange-body { display: flex; }
.b-align { width: 44px; margin-left: 7px; padding-top: 1px; }
.b-pos { width: 44px; padding-top: 1px; }
.arr-col { margin: -2px 0 0 3px; }
.arr-col .row { gap: 2px; }
.arr-t { width: 81px; }

.edit-body { display: flex; }
.b-change { width: 60px; padding-top: 3px; }
.b-change .big-label { margin-top: 0; line-height: 16px; }
.b-change svg:first-child { margin-bottom: 3px; }
.big-label.sh { display: flex; align-items: center; gap: 3px; }
.edit-col { margin-top: -2px; }
.edit-col .row { gap: 2px; }

/* work area */
.work { flex: 1; min-height: 0; display: flex; }
.panel { width: 252px; flex: none; background: #ebebeb; display: flex; flex-direction: column; position: relative; }
.panel-head { height: 69px; flex: none; padding: 24px 8px 0 3px; box-sizing: border-box; display: flex; align-items: flex-start; justify-content: space-between; }
.panel-head h2 { margin: 0; font-size: 22px; line-height: 26px; font-weight: 400; color: #3955a3; }
.panel-head svg { margin-top: 9px; }
.search {
  box-sizing: border-box; flex: none; width: 240px; height: 19px; margin-left: 3px; background: #fff; border: 1px solid #b4b4b4;
  display: flex; align-items: center; padding: 0 1px; color: #222; font-size: 12.5px;
}
.search span { flex: 1; }
.drop { margin-right: 9px; }
.stencils { margin-top: 26px; flex: none; }
.st { height: 23.5px; display: flex; align-items: center; padding-left: 2px; gap: 16px; }
.st.cur { background: #c3d0ee; justify-content: space-between; gap: 0; padding-right: 2px; color: #333; }
.shape-grid {
  display: grid;
  grid-template-columns: 117px 135px;
  margin-top: 14px;
  grid-auto-rows: 38px;
  grid-template-rows: 38px 38px 13px;
  line-height: 16px;
}
.item { display: flex; align-items: center; }
.si { width: 36px; display: flex; align-items: center; justify-content: center; flex: none; height: 100%; }
.item.sel { background: #c3d0ee; margin: 2px 3px 2px 2px; }
.item.sel .si { width: 34px; }
.divider { grid-column: 1 / 3; margin: 5px 40px 0 25px; border-top: 1px solid #ddd; box-sizing: border-box; }

.main {
  flex: 1;
  min-width: 0;
  background: #e6e6e6;
  display: grid;
  grid-template-columns: 12px 16px 1292px 15px;
  grid-template-rows: 17px 16px 583px 16px 38px;
}
.corner { grid-column: 2; grid-row: 2; background: #eee; }
.hruler { grid-column: 3; grid-row: 2; background: #ececec; }
.vruler { grid-column: 2; grid-row: 3; background: #ececec; }
.rtext { font-size: 10px; fill: #555; font-family: Roboto, sans-serif; }
.canvas { grid-column: 3; grid-row: 3; overflow: hidden; }
.head-text { font-family: Lato, sans-serif; font-weight: 700; font-size: 20px; fill: #fff; }
.msg-text { font-family: Lato, sans-serif; font-size: 13.3px; fill: #639b3e; }

.vscroll {
  grid-column: 4; grid-row: 2 / 4; margin-top: 2px; background: #d9d9d9;
  display: flex; flex-direction: column; align-items: stretch;
}
.sbtn {
  box-sizing: border-box; width: 15px; height: 15px; flex: none; background: #fff; border: 1px solid #9a9a9a;
  display: flex; align-items: center; justify-content: center;
}
.vthumb { box-sizing: border-box; height: 135px; margin-top: 205px; background: #fff; border: 1px solid #a0a0a0; }
.sbtn.down { margin-top: auto; margin-bottom: 2px; }
.hscroll { grid-column: 2 / 4; grid-row: 4; background: #d9d9d9; display: flex; }
.hthumb { box-sizing: border-box; width: 413px; margin-left: 359px; background: #fff; border: 1px solid #a0a0a0; }
.sbtn.right { margin-left: auto; margin-right: 1px; }
.pagetabs {
  grid-column: 2 / 5; grid-row: 5; display: flex; align-items: center; padding: 0 0 0 12px; gap: 0; font-size: 12px;
}
.pagetabs b { color: #3955a3; font-weight: 700; width: 68px; }
.all { display: flex; align-items: center; gap: 4px; width: 55px; color: #555; }

/* status */
.status {
  height: 21px; flex: none; box-sizing: border-box; background: #f2f1f0; border-top: 1px solid #d2d2d2;
  display: flex; align-items: center; font-size: 11px; color: #555;
}
.s1 { margin-left: 1px; width: 73px; }
.s2 { width: 124px; }
.present { margin-left: 1122px; }
.zm { margin-left: 18px; width: 9px; text-align: center; font-size: 13px; }
.slider { width: 100px; height: 1px; background: #888; margin: 0 -14.5px 0 4.5px; position: relative; }
.slider i { position: absolute; background: #777; }
.slider .mid { left: 49px; top: -3px; width: 1px; height: 7px; }
.slider .knob { left: 53px; top: -5px; width: 4px; height: 11px; }
.pct { margin-left: 13.5px; width: 33px; font-size: 10.5px; }
.fit { margin: 0 12px 0 5px; }

/* taskbar */
.taskbar { height: 17px; flex: none; position: relative; overflow: hidden; background: linear-gradient(90deg, #11263a 0%, #172634 45%, #1c2027 100%); color: #f2f2f2; }
.tb { position: absolute; left: 0; top: 0; }
.tb-num { font-size: 9px; fill: #123; font-family: Roboto, sans-serif; }
.temp { position: absolute; left: 45px; top: 10px; font-size: 11px; }
.clock { position: absolute; left: 1533px; top: 9px; font-size: 11.5px; }
</style>
